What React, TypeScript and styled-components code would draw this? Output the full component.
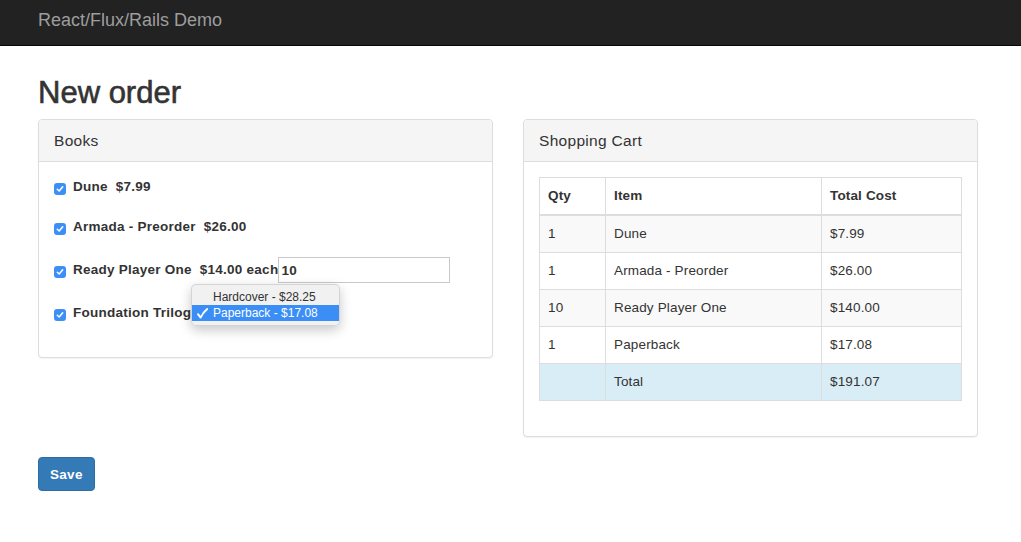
import React from "react";
import styled, { createGlobalStyle } from "styled-components";

const GlobalStyle = createGlobalStyle`
  html, body { margin: 0; padding: 0; background: #fff; }
  body {
    font-family: "Liberation Sans", Arial, sans-serif;
    font-size: 13.5px;
    line-height: 20px;
    color: #333;
  }
  * { box-sizing: border-box; }
`;

const Navbar = styled.nav`
  height: 46px;
  background: #222;
  border-bottom: 1px solid #080808;
  padding: 10px 0 0 38px;
`;

const Brand = styled.a`
  font-size: 18px;
  line-height: 20px;
  color: #9d9d9d;
  text-decoration: none;
`;

const Container = styled.main`
  width: 940px;
  margin-left: 38px;
`;

const Title = styled.h1`
  margin: 29px 0 9px;
  font-size: 31px;
  line-height: 35px;
  font-weight: 500;
  color: #333;
  -webkit-text-stroke: 0.6px #333;
`;

const Columns = styled.div`
  display: grid;
  grid-template-columns: 455px 455px;
  column-gap: 30px;
  align-items: start;
  margin-bottom: 20px;
`;

const Panel = styled.section`
  border: 1px solid #ddd;
  border-radius: 4px;
  background: #fff;
  box-shadow: 0 1px 1px rgba(0, 0, 0, 0.05);
`;

const PanelHeading = styled.div`
  background: #f5f5f5;
  border-bottom: 1px solid #ddd;
  border-radius: 3px 3px 0 0;
  padding: 10px 15px;
`;

const PanelTitle = styled.h3`
  margin: 0;
  font-size: 15.5px;
  line-height: 21px;
  font-weight: 400;
  letter-spacing: 0.3px;
  color: #333;
`;

const PanelBody = styled.div<{ $bottom: number }>`
  padding: 15px 15px ${(p) => p.$bottom}px;
`;

const BookList = styled.div`
  display: flex;
  flex-direction: column;
  gap: 20px;
`;

const BookRow = styled.label`
  position: relative;
  display: flex;
  align-items: center;
  min-height: 20px;
  font-weight: 700;
  letter-spacing: 0.25px;
  color: #333;
`;

const Check = styled.span`
  width: 12px;
  height: 12px;
  margin: 4px 7px 0 0;
  border-radius: 3px;
  background: #3b8ff5;
  display: inline-flex;
  align-items: center;
  justify-content: center;
  flex: none;
`;

const Price = styled.span`
  margin-left: 8px;
`;

const QtyInput = styled.input`
  width: 172px;
  height: 26px;
  margin: 0;
  padding: 0 2px;
  border: 1px solid #c9c9c9;
  border-radius: 0;
  font: inherit;
  letter-spacing: 0.25px;
  color: #333;
  outline: none;
`;

const Menu = styled.ul`
  position: absolute;
  left: 137px;
  top: -19px;
  width: 149px;
  margin: 0;
  padding: 4px 0;
  list-style: none;
  background: rgba(241, 241, 241, 0.98);
  border: 1px solid rgba(0, 0, 0, 0.12);
  border-radius: 5px;
  box-shadow: 0 4px 12px rgba(0, 0, 0, 0.22);
  font-weight: 400;
  letter-spacing: 0;
  font-size: 12px;
  line-height: 16px;
`;

const MenuItem = styled.li<{ $active?: boolean }>`
  position: relative;
  height: 16px;
  padding-left: 21px;
  color: ${(p) => (p.$active ? "#fff" : "#333")};
  background: ${(p) => (p.$active ? "#3a8ef5" : "transparent")};
`;

const Tick = styled.span`
  position: absolute;
  left: 5px;
  top: 3px;
  width: 11px;
  height: 11px;
  display: flex;
`;

const Table = styled.table`
  width: 423px;
  border-collapse: collapse;
  border-spacing: 0;
  letter-spacing: 0.15px;
  margin-bottom: 20px;
`;

const Th = styled.th<{ $w?: number }>`
  text-align: left;
  font-weight: 700;
  padding: 8px 8px;
  line-height: 20px;
  border: 1px solid #ddd;
  border-bottom-width: 2px;
  width: ${(p) => (p.$w ? `${p.$w}px` : "auto")};
`;

const Tr = styled.tr<{ $tone: "stripe" | "plain" | "info" }>`
  background: ${(p) =>
    p.$tone === "stripe" ? "#f9f9f9" : p.$tone === "info" ? "#d9edf7" : "#fff"};
`;

const Td = styled.td`
  padding: 8px 8px;
  line-height: 20px;
  border: 1px solid #ddd;
`;

const SaveButton = styled.button`
  height: 34px;
  padding: 0 11px;
  background: #337ab7;
  border: 1px solid #2e6da4;
  border-radius: 4px;
  color: #fff;
  font-family: "Liberation Sans", Arial, sans-serif;
  font-size: 13.5px;
  font-weight: 700;
  letter-spacing: 0.3px;
  cursor: pointer;
`;

const CheckMark = () => (
  <svg width="8" height="8" viewBox="0 0 8 8">
    <path d="M1.3 4.2 L3.2 6 L6.7 1.8" fill="none" stroke="#fff" strokeWidth="1.5" strokeLinecap="round" strokeLinejoin="round" />
  </svg>
);

const MenuTick = () => (
  <svg width="11" height="11" viewBox="0 0 11 11">
    <path d="M1 6.2 L3.6 9.6 Q6 4.5 10.2 1" fill="none" stroke="#fff" strokeWidth="1.9" strokeLinecap="round" strokeLinejoin="round" />
  </svg>
);

const cart = [
  { qty: "1", item: "Dune", cost: "$7.99" },
  { qty: "1", item: "Armada - Preorder", cost: "$26.00" },
  { qty: "10", item: "Ready Player One", cost: "$140.00" },
  { qty: "1", item: "Paperback", cost: "$17.08" },
];

export default function App() {
  return (
    <>
      <GlobalStyle />
      <Navbar>
        <Brand href="#">React/Flux/Rails Demo</Brand>
      </Navbar>
      <Container>
        <Title>New order</Title>
        <Columns>
          <Panel>
            <PanelHeading>
              <PanelTitle>Books</PanelTitle>
            </PanelHeading>
            <PanelBody $bottom={34}>
              <BookList>
                <BookRow>
                  <Check><CheckMark /></Check>
                  Dune<Price>$7.99</Price>
                </BookRow>
                <BookRow>
                  <Check><CheckMark /></Check>
                  Armada - Preorder<Price>$26.00</Price>
                </BookRow>
                <BookRow>
                  <Check><CheckMark /></Check>
                  Ready Player One<Price>$14.00 each</Price>
                  <QtyInput defaultValue="10" />
                </BookRow>
                <BookRow>
                  <Check><CheckMark /></Check>
                  Foundation Trilogy
                  <Menu>
                    <MenuItem>Hardcover - $28.25</MenuItem>
                    <MenuItem $active>
                      <Tick><MenuTick /></Tick>Paperback - $17.08
                    </MenuItem>
                  </Menu>
                </BookRow>
              </BookList>
            </PanelBody>
          </Panel>
          <Panel>
            <PanelHeading>
              <PanelTitle>Shopping Cart</PanelTitle>
            </PanelHeading>
            <PanelBody $bottom={15}>
              <Table>
                <thead>
                  <tr>
                    <Th $w={66}>Qty</Th>
                    <Th $w={216}>Item</Th>
                    <Th>Total Cost</Th>
                  </tr>
                </thead>
                <tbody>
                  {cart.map((r, i) => (
                    <Tr key={r.item} $tone={i % 2 === 0 ? "stripe" : "plain"}>
                      <Td>{r.qty}</Td>
                      <Td>{r.item}</Td>
                      <Td>{r.cost}</Td>
                    </Tr>
                  ))}
                  <Tr $tone="info">
                    <Td></Td>
                    <Td>Total</Td>
                    <Td>$191.07</Td>
                  </Tr>
                </tbody>
              </Table>
            </PanelBody>
          </Panel>
        </Columns>
        <SaveButton>Save</SaveButton>
      </Container>
    </>
  );
}
